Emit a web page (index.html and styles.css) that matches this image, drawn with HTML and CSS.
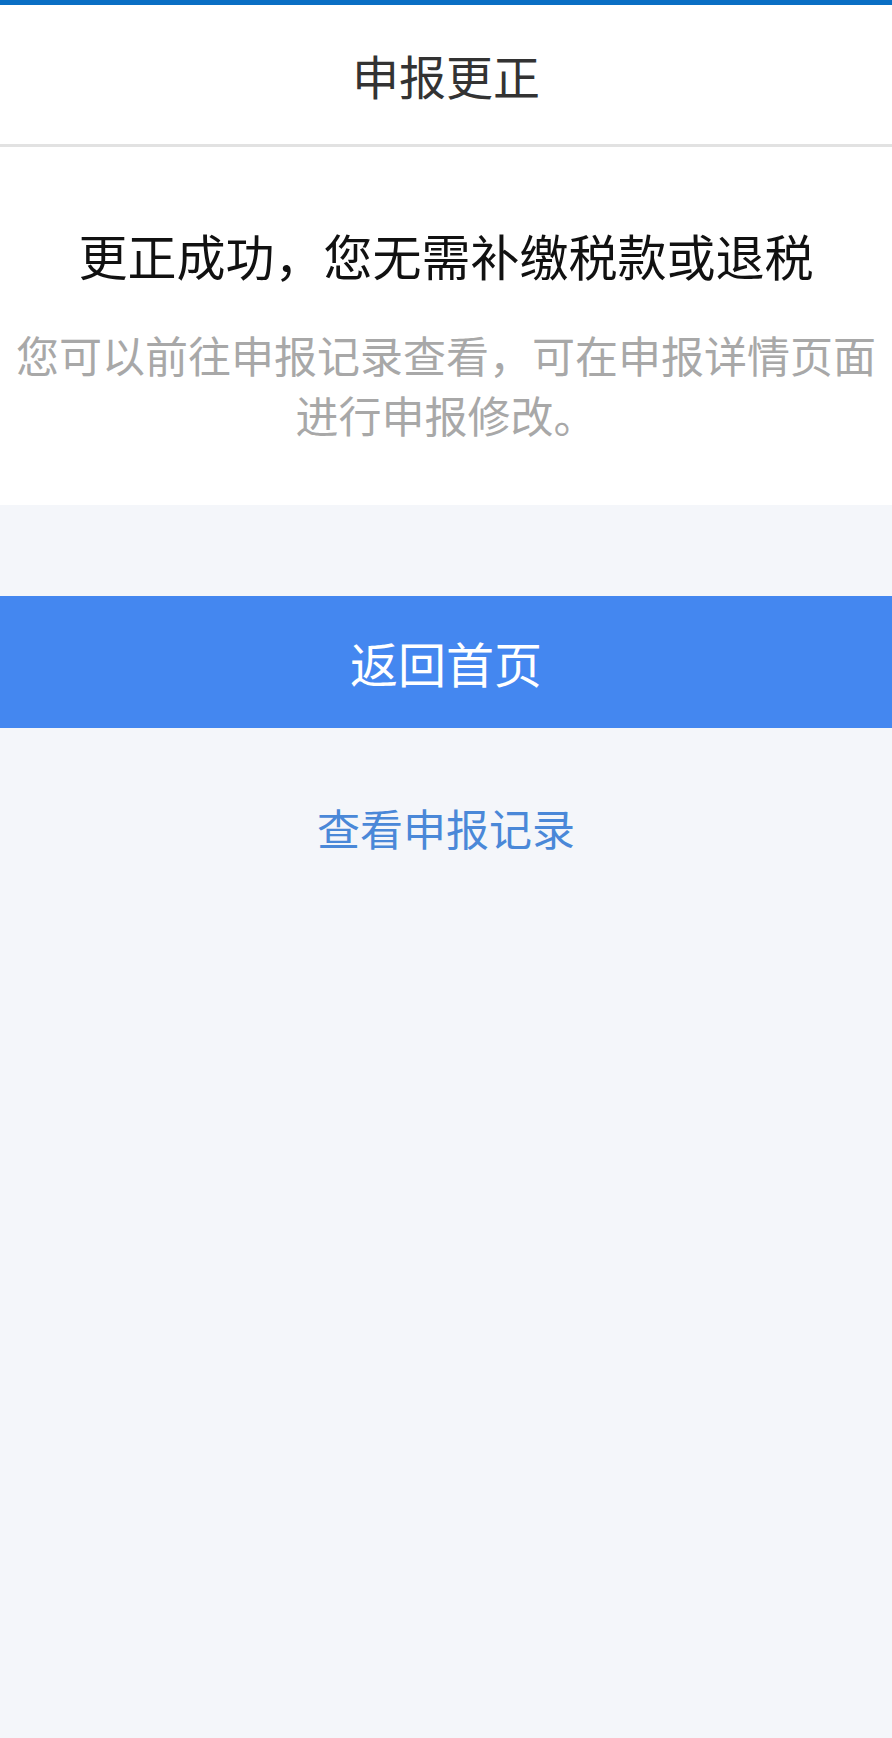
FILE: index.html
```html
<!DOCTYPE html>
<html lang="zh-CN">
<head>
<meta charset="utf-8">
<title>申报更正</title>
<link rel="stylesheet" href="styles.css">
</head>
<body>
<header class="topbar">
  <h1 class="title">申报更正</h1>
</header>
<section class="result">
  <h2 class="result-heading">更正成功，您无需补缴税款或退税</h2>
  <p class="result-desc">您可以前往申报记录查看，可在申报详情页面进行申报修改。</p>
</section>
<div class="actions">
  <button class="btn-primary" type="button">返回首页</button>
  <a class="link" href="#">查看申报记录</a>
</div>
</body>
</html>
```
FILE: styles.css
```css
html, body {
  margin: 0;
  padding: 0;
}
body {
  background: #f4f6fa;
  font-family: "Noto Sans CJK SC", "Noto Sans", sans-serif;
  min-height: 1738px;
}
.topbar {
  background: #ffffff;
  border-top: 5px solid #0a6fc4;
  border-bottom: 3px solid #e2e2e2;
  height: 139px;
  display: flex;
  align-items: center;
  justify-content: center;
}
.title {
  margin: 0;
  font-size: 47px;
  font-weight: 400;
  color: #333333;
  line-height: 60px;
}
.result {
  background: #ffffff;
  padding: 78px 8px 61px;
  text-align: center;
}
.result-heading {
  margin: 0;
  font-size: 49px;
  font-weight: 400;
  color: #111111;
  line-height: 60px;
}
.result-desc {
  margin: 39px 0 0;
  font-size: 43px;
  color: #a8a8a8;
  line-height: 60px;
}
.actions {
  display: flex;
  flex-direction: column;
  align-items: center;
  padding-top: 91px;
}
.btn-primary {
  width: 100%;
  height: 132px;
  border: none;
  background: #4487f0;
  color: #ffffff;
  font-family: inherit;
  font-size: 48px;
  padding: 0;
}
.link {
  margin-top: 69px;
  font-size: 43px;
  line-height: 60px;
  color: #4a88d8;
  text-decoration: none;
}
```
